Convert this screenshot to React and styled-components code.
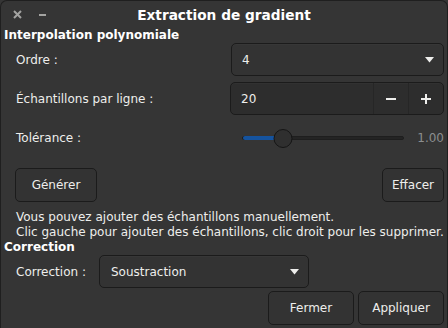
import styled, { createGlobalStyle } from "styled-components";

const GlobalStyle = createGlobalStyle`
  html, body {
    margin: 0;
    padding: 0;
    background: #353535;
  }
  * { box-sizing: border-box; }
`;

// window

const Win = styled.div`
  width: 448px;
  height: 328px;
  background: #353535;
  border: 1px solid #1f1f1f;
  border-bottom: none;
  border-radius: 7px 7px 0 0;
  font-family: "DejaVu Sans", "Liberation Sans", sans-serif;
  font-size: 12px;
  color: #eeeeec;
  display: flex;
  flex-direction: column;
  overflow: hidden;
`;

const TitleBar = styled.div`
  height: 27px;
  flex: none;
  display: flex;
  align-items: center;
  position: relative;
`;

const WinCtl = styled.span`
  width: 25px;
  height: 27px;
  display: flex;
  align-items: center;
  justify-content: center;
  color: #9a9a98;
`;

const Controls = styled.div`
  display: flex;
  padding-left: 4px;
`;

const Title = styled.div`
  position: absolute;
  left: 0;
  right: 0;
  text-align: center;
  font-weight: bold;
  font-size: 13.7px;
  color: #ffffff;
  pointer-events: none;
`;

const Content = styled.div`
  flex: 1;
  display: flex;
  flex-direction: column;
  padding: 0 3px 3px 3px;
`;

const Section = styled.div`
  font-weight: bold;
  font-size: 12px;
  color: #ffffff;
  height: 14px;
  line-height: 14px;
`;

const Row = styled.div`
  display: flex;
  align-items: center;
  padding-left: ${(p) => p.$indent ?? 12}px;
  margin-top: ${(p) => p.$mt ?? 0}px;
  height: ${(p) => p.$h ?? 33}px;
`;

const Label = styled.span`
  width: ${(p) => p.$w}px;
  flex: none;
`;

const Box = styled.div`
  height: 33px;
  border: 1px solid #1b1b1b;
  border-radius: 5px;
  background: ${(p) => (p.$entry ? "#2d2d2d" : "#333333")};
  box-shadow: inset 0 1px rgba(255, 255, 255, 0.02);
  display: flex;
  align-items: center;
  width: ${(p) => (p.$w ? `${p.$w}px` : "auto")};
  flex: ${(p) => (p.$w ? "none" : "1")};
  overflow: hidden;
`;

const BoxText = styled.span`
  flex: 1;
  padding-left: ${(p) => p.$pl ?? 10}px;
`;

const Arrow = styled.svg`
  margin-right: 9px;
`;

const SpinBtn = styled.div`
  width: 35px;
  height: 100%;
  border-left: 1px solid #262626;
  display: flex;
  align-items: center;
  justify-content: center;
`;

const Slider = styled.div`
  margin-left: ${(p) => p.$ml}px;
  width: 162px;
  height: 20px;
  position: relative;
  display: flex;
  align-items: center;
`;

const Track = styled.div`
  width: 100%;
  height: 4px;
  border-radius: 2px;
  background: #242424;
  border: 1px solid #1e1e1e;
  position: relative;
`;

const Fill = styled.div`
  position: absolute;
  left: 0;
  top: -1px;
  height: 4px;
  border-radius: 2px;
  background: #15539e;
`;

const Knob = styled.div`
  position: absolute;
  top: 1px;
  width: 19px;
  height: 19px;
  border-radius: 50%;
  background: #2f2f2f;
  border: 1px solid #151515;
  transform: translateX(-50%);
`;

const Value = styled.span`
  margin-left: auto;
  color: #8b8e8f;
`;

const Button = styled.button`
  height: 34px;
  width: ${(p) => p.$w}px;
  border: 1px solid #1b1b1b;
  border-radius: 5px;
  background: #333333;
  color: #eeeeec;
  font-family: inherit;
  font-size: 12px;
  padding: 0;
`;

const Help = styled.div`
  padding-left: 12px;
  margin-top: 9px;
  line-height: 15px;
`;

const Footer = styled.div`
  display: flex;
  justify-content: flex-end;
  gap: 4px;
  margin-top: 3px;
`;

const DropArrow = () => (
  <Arrow width="9" height="6" viewBox="0 0 9 6">
    <path d="M0 0 L9 0 L4.5 5.5 Z" fill="#eeeeec" />
  </Arrow>
);

const App = () => {
  const pct = 0.25;
  return (
    <>
      <GlobalStyle />
      <Win>
        <TitleBar>
          <Controls>
            <WinCtl>
              <svg width="9" height="9" viewBox="0 0 9 9">
                <path d="M1 1 L8 8 M8 1 L1 8" stroke="#a3a3a1" strokeWidth="2" />
              </svg>
            </WinCtl>
            <WinCtl>
              <svg width="9" height="9" viewBox="0 0 9 9">
                <path d="M1 5 L8 5" stroke="#a3a3a1" strokeWidth="2" />
              </svg>
            </WinCtl>
          </Controls>
          <Title>Extraction de gradient</Title>
        </TitleBar>
        <Content>
          <Section>Interpolation polynomiale</Section>
          <Row $mt={1}>
            <Label $w={215}>Ordre :</Label>
            <Box>
              <BoxText>4</BoxText>
              <DropArrow />
            </Box>
          </Row>
          <Row $mt={6}>
            <Label $w={214}>Échantillons par ligne :</Label>
            <Box $entry>
              <BoxText>20</BoxText>
              <SpinBtn>
                <svg width="12" height="12" viewBox="0 0 12 12">
                  <path d="M1 6 L11 6" stroke="#eeeeec" strokeWidth="2" />
                </svg>
              </SpinBtn>
              <SpinBtn>
                <svg width="12" height="12" viewBox="0 0 12 12">
                  <path d="M1 6 L11 6 M6 1 L6 11" stroke="#eeeeec" strokeWidth="2" />
                </svg>
              </SpinBtn>
            </Box>
          </Row>
          <Row $mt={4} $h={38}>
            <Label $w={200}>Tolérance :</Label>
            <Slider $ml={26}>
              <Track>
                <Fill style={{ width: `${pct * 100}%` }} />
              </Track>
              <Knob style={{ left: `${pct * 100}%` }} />
            </Slider>
            <Value>1.00</Value>
          </Row>
          <Row $mt={11} $indent={11}>
            <Button $w={82}>Générer</Button>
            <Button $w={62} style={{ marginLeft: "auto" }}>
              Effacer
            </Button>
          </Row>
          <Help>
            Vous pouvez ajouter des échantillons manuellement.
            <br />
            Clic gauche pour ajouter des échantillons, clic droit pour les supprimer.
          </Help>
          <Section>Correction</Section>
          <Row $mt={1}>
            <Label $w={83}>Correction :</Label>
            <Box $w={210}>
              <BoxText $pl={11}>Soustraction</BoxText>
              <DropArrow />
            </Box>
          </Row>
          <Footer>
            <Button $w={86}>Fermer</Button>
            <Button $w={86}>Appliquer</Button>
          </Footer>
        </Content>
      </Win>
    </>
  );
};

export default App;
